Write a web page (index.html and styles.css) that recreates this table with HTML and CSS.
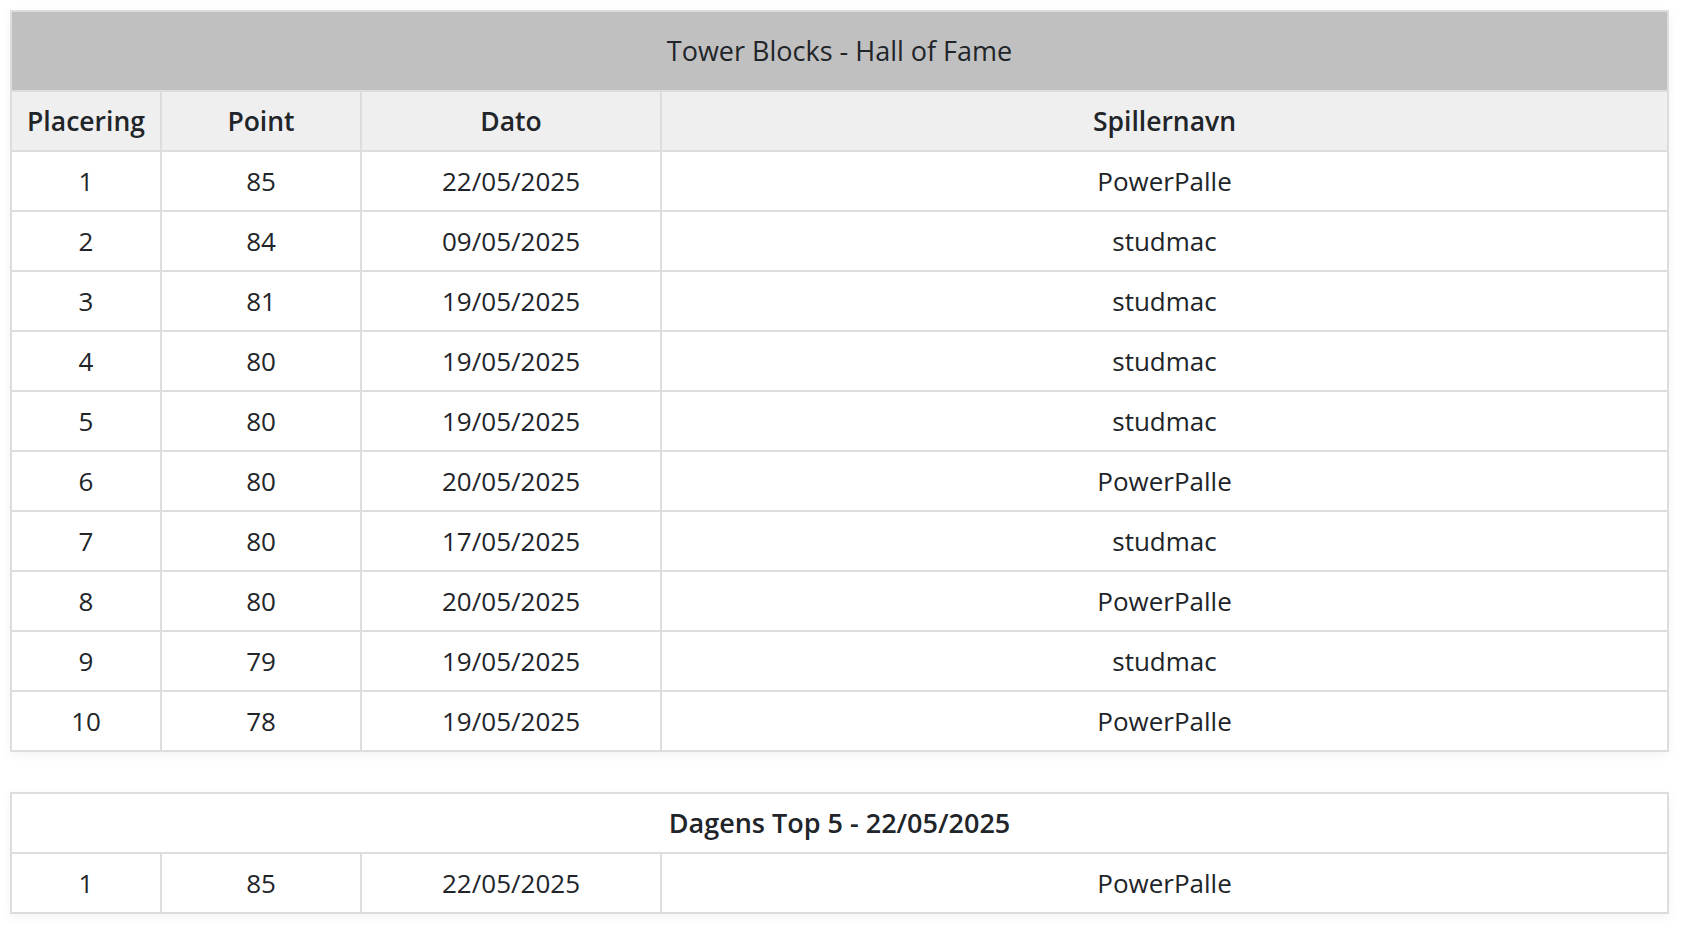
FILE: index.html
```html
<!DOCTYPE html>
<html lang="da">
<head>
<meta charset="utf-8">
<title>Tower Blocks - Hall of Fame</title>
<link rel="stylesheet" href="styles.css">
</head>
<body>
<main class="page">
  <table class="score-table">
    <colgroup><col class="c-rank"><col class="c-points"><col class="c-date"><col class="c-name"></colgroup>
    <thead>
      <tr><th colspan="4" class="title">Tower Blocks - Hall of Fame</th></tr>
      <tr class="heads"><th>Placering</th><th>Point</th><th>Dato</th><th>Spillernavn</th></tr>
    </thead>
    <tbody>
      <tr><td>1</td><td>85</td><td>22/05/2025</td><td>PowerPalle</td></tr>
      <tr><td>2</td><td>84</td><td>09/05/2025</td><td>studmac</td></tr>
      <tr><td>3</td><td>81</td><td>19/05/2025</td><td>studmac</td></tr>
      <tr><td>4</td><td>80</td><td>19/05/2025</td><td>studmac</td></tr>
      <tr><td>5</td><td>80</td><td>19/05/2025</td><td>studmac</td></tr>
      <tr><td>6</td><td>80</td><td>20/05/2025</td><td>PowerPalle</td></tr>
      <tr><td>7</td><td>80</td><td>17/05/2025</td><td>studmac</td></tr>
      <tr><td>8</td><td>80</td><td>20/05/2025</td><td>PowerPalle</td></tr>
      <tr><td>9</td><td>79</td><td>19/05/2025</td><td>studmac</td></tr>
      <tr><td>10</td><td>78</td><td>19/05/2025</td><td>PowerPalle</td></tr>
    </tbody>
  </table>

  <table class="score-table today">
    <colgroup><col class="c-rank"><col class="c-points"><col class="c-date"><col class="c-name"></colgroup>
    <thead>
      <tr><th colspan="4" class="subtitle">Dagens Top 5 - 22/05/2025</th></tr>
    </thead>
    <tbody>
      <tr><td>1</td><td>85</td><td>22/05/2025</td><td>PowerPalle</td></tr>
    </tbody>
  </table>
</main>
</body>
</html>
```

FILE: styles.css
```css
html, body {
  margin: 0;
  padding: 0;
  background: #ffffff;
}

body {
  font-family: "Open Sans", "Liberation Sans", sans-serif;
  color: #212529;
}

.page {
  padding: 10px 0 0 10px;
}

.score-table {
  width: 1659px;
  table-layout: fixed;
  border-collapse: collapse;
  border: 2px solid #dddddd;
  box-shadow: 0 3px 10px rgba(0, 0, 0, 0.05);
  margin-bottom: 40px;
  background: #ffffff;
}

.c-rank { width: 150px; }
.c-points { width: 200px; }
.c-date { width: 300px; }

.score-table th,
.score-table td {
  border: 2px solid #dddddd;
  padding: 12px;
  font-size: 26px;
  line-height: 34px;
  text-align: center;
  white-space: nowrap;
}

.score-table th {
  font-weight: 600;
  font-size: 26.5px;
}

.score-table td {
  font-weight: 400;
}

.score-table .title {
  background: #c0c0c0;
  padding-top: 22px;
  padding-bottom: 22px;
  font-weight: 500;
  font-size: 27px;
}

.score-table .heads th {
  background: #efefef;
}

.score-table .subtitle {
  background: #ffffff;
  font-size: 27px;
}
```
